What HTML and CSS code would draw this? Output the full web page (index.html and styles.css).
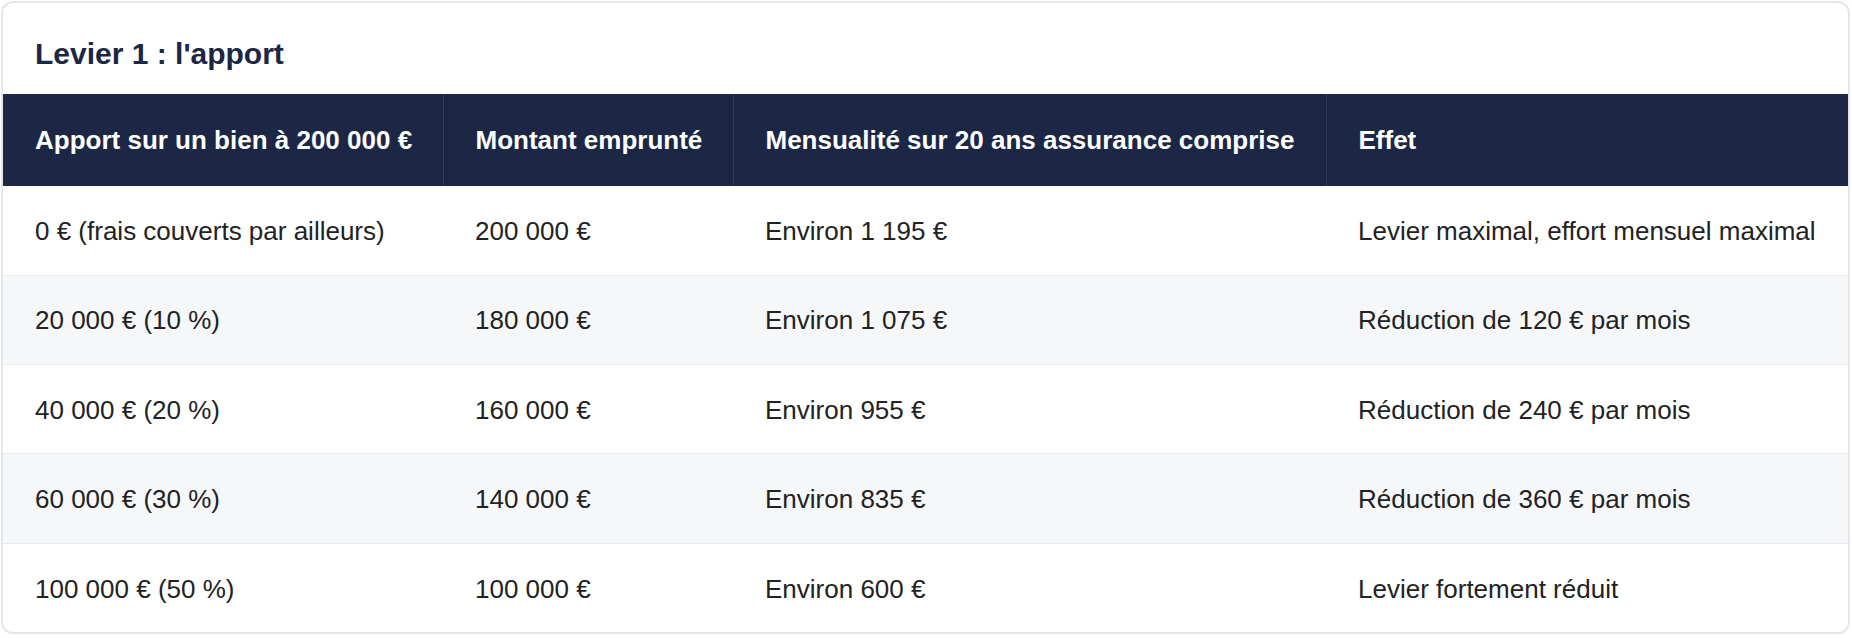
FILE: index.html
```html
<!DOCTYPE html>
<html lang="fr">
<head>
<meta charset="utf-8">
<title>Levier 1 : l'apport</title>
<link rel="stylesheet" href="styles.css">
</head>
<body>
<section class="card">
  <h2 class="card-title">Levier 1 : l'apport</h2>
  <table class="data">
    <colgroup>
      <col class="c1"><col class="c2"><col class="c3"><col class="c4">
    </colgroup>
    <thead>
      <tr>
        <th>Apport sur un bien à 200 000 €</th>
        <th>Montant emprunté</th>
        <th>Mensualité sur 20 ans assurance comprise</th>
        <th>Effet</th>
      </tr>
    </thead>
    <tbody>
      <tr><td>0 € (frais couverts par ailleurs)</td><td>200 000 €</td><td>Environ 1 195 €</td><td>Levier maximal, effort mensuel maximal</td></tr>
      <tr><td>20 000 € (10 %)</td><td>180 000 €</td><td>Environ 1 075 €</td><td>Réduction de 120 € par mois</td></tr>
      <tr><td>40 000 € (20 %)</td><td>160 000 €</td><td>Environ 955 €</td><td>Réduction de 240 € par mois</td></tr>
      <tr><td>60 000 € (30 %)</td><td>140 000 €</td><td>Environ 835 €</td><td>Réduction de 360 € par mois</td></tr>
      <tr><td>100 000 € (50 %)</td><td>100 000 €</td><td>Environ 600 €</td><td>Levier fortement réduit</td></tr>
    </tbody>
  </table>
</section>
</body>
</html>
```
FILE: styles.css
```css
* { box-sizing: border-box; }
html, body { margin: 0; padding: 0; background: #ffffff; }
body { font-family: "Liberation Sans", Arial, sans-serif; color: #222222; }

.card {
  margin: 1px;
  width: 1849px;
  border: 2px solid #e3e6ea;
  border-radius: 12px;
  overflow: hidden;
  background: #ffffff;
}

.card-title {
  margin: 0;
  padding: 33px 32px 22px;
  font-size: 30px;
  line-height: 36px;
  font-weight: 700;
  color: #1b2744;
}

.data {
  width: 100%;
  border-collapse: collapse;
  table-layout: fixed;
  font-size: 26px;
}

.c1 { width: 440px; }
.c2 { width: 290px; }
.c3 { width: 593px; }

.data th {
  background: #1b2744;
  color: #ffffff;
  font-weight: 700;
  text-align: left;
  height: 92px;
  padding: 0 32px;
  border-right: 1px solid #2f3b58;
  white-space: nowrap;
}
.data th:last-child { border-right: none; }

.data td {
  height: 89.3px;
  padding: 2px 32px 0;
  border-bottom: 1px solid #e9ebef;
  white-space: nowrap;
  color: #222222;
}
.data tbody tr:nth-child(even) td { background: #f6f7f9; }
.data tbody tr:last-child td { border-bottom: none; }
```
